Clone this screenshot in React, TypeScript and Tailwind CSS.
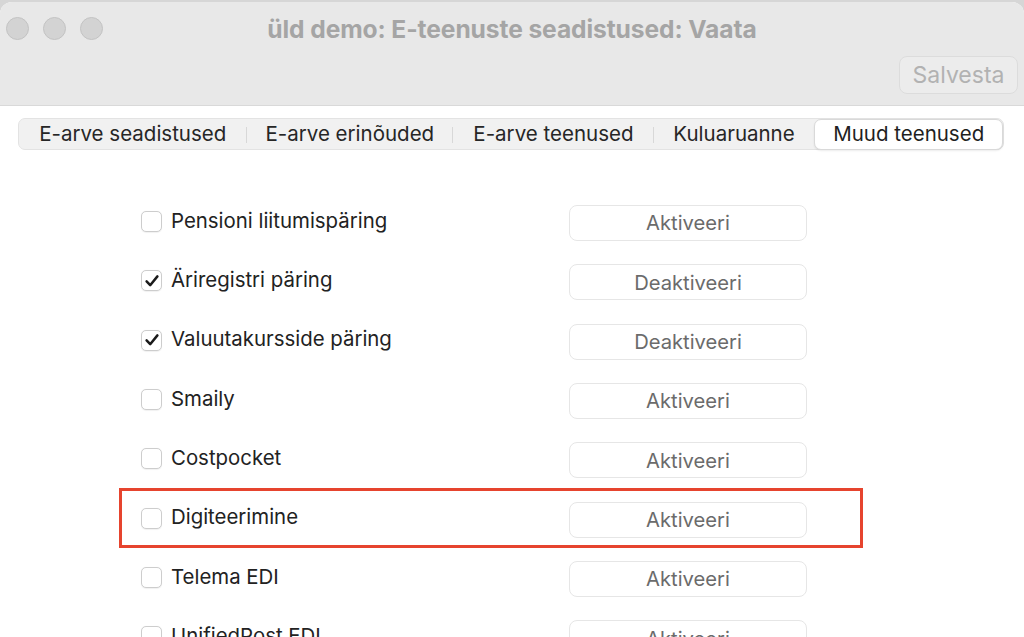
import React from 'react';

// Settings window: "Muud teenused" tab with service activation rows

const tabs = [
  { label: 'E-arve seadistused', w: 'w-[228px]' },
  { label: 'E-arve erinõuded', w: 'w-[207px]' },
  { label: 'E-arve teenused', w: 'w-[201px]' },
  { label: 'Kuluaruanne', w: 'w-[161px]' },
  { label: 'Muud teenused', w: 'w-[189px]' },
];

const services = [
  { name: 'Pensioni liitumispäring', on: false },
  { name: 'Äriregistri päring', on: true },
  { name: 'Valuutakursside päring', on: true },
  { name: 'Smaily', on: false },
  { name: 'Costpocket', on: false },
  { name: 'Digiteerimine', on: false, marked: true },
  { name: 'Telema EDI', on: false },
  { name: 'UnifiedPost EDI', on: false },
];

function Checkbox({ checked }: { checked: boolean }) {
  return (
    <span className="flex h-[21px] w-[21px] shrink-0 items-center justify-center rounded-[5px] border border-[#cdcdcd] bg-white shadow-[0_0.5px_1px_rgba(0,0,0,0.06)]">
      {checked && (
        <svg width="16" height="16" viewBox="0 0 16 16" fill="none">
          <path d="M2.6 8.4 6.2 12.2 13.4 3.4" stroke="#1a1a1a" strokeWidth="2.5" strokeLinecap="round" strokeLinejoin="round" />
        </svg>
      )}
    </span>
  );
}

export default function App() {
  return (
    <div className="h-[637px] w-[1024px] overflow-hidden bg-[#d6d6d6] pt-[2px] font-['Inter',sans-serif]">
      <div className="flex h-full flex-col overflow-hidden rounded-t-[12px] bg-white">
        {/* Title bar + toolbar */}
        <div className="h-[104px] shrink-0 border-b border-[#d9d9d9] bg-[#e8e8e8]">
          <div className="relative flex h-[52px] items-center">
            <div className="flex items-center gap-[14px] pl-[6px]">
              <span className="h-[23px] w-[23px] rounded-full border border-[#c3c3c3] bg-[#d3d3d3]" />
              <span className="h-[23px] w-[23px] rounded-full border border-[#c3c3c3] bg-[#d3d3d3]" />
              <span className="h-[23px] w-[23px] rounded-full border border-[#c3c3c3] bg-[#d3d3d3]" />
            </div>
            <div className="absolute inset-x-0 top-[9px] text-center text-[24.6px] font-bold tracking-[-0.1px] text-[#a5a5a5]">
              üld demo: E-teenuste seadistused: Vaata
            </div>
          </div>
          <div className="flex justify-end pr-[6px] pt-[2px]">
            <button className="flex h-[38px] w-[119px] items-center justify-center rounded-[8px] border border-[#dcdcdc] bg-[#ececec] text-[23px] text-[#b2b2b2]">
              Salvesta
            </button>
          </div>
        </div>

        {/* Segmented tabs */}
        <div className="pl-[18px] pt-[12px]">
          <div className="flex h-[32px] w-[986px] items-center rounded-[7px] border border-[#e3e3e3] bg-[#f1f1f1]">
            {tabs.map((t, i) => {
              const active = i === tabs.length - 1;
              const nextActive = i === tabs.length - 2;
              return (
                <div key={t.label} className={`relative flex h-full items-center justify-center ${t.w}`}>
                  {active ? (
                    <div className="flex h-[31px] w-full items-center justify-center rounded-[7px] border border-[#d9d9d9] bg-white pt-[1px] text-[20.5px] text-[#1f1f1f] shadow-[0_1px_2px_rgba(0,0,0,0.08)]">
                      {t.label}
                    </div>
                  ) : (
                    <span className="pt-[1px] text-[20.5px] text-[#262626]">{t.label}</span>
                  )}
                  {!active && !nextActive && (
                    <span className="absolute right-0 top-[8px] h-[16px] w-px bg-[#d8d8d8]" />
                  )}
                </div>
              );
            })}
          </div>
        </div>

        {/* Services list */}
        <div className="ml-[119px] mt-[42px] w-[744px]">
          {services.map((s) => (
            <div key={s.name} className="relative flex h-[59.3px] items-center">
              <div className="flex w-[450px] items-center gap-[9px] pl-[22px]">
                <Checkbox checked={s.on} />
                <span className="-mt-[1px] text-[20.4px] text-[#222222]">{s.name}</span>
              </div>
              <button className="mt-[3px] flex h-[36px] w-[238px] items-center justify-center rounded-[8px] border border-[#e6e6e6] bg-white pt-[1px] text-[20.2px] text-[#6b6b6b]">
                {s.on ? 'Deaktiveeri' : 'Aktiveeri'}
              </button>
              {s.marked && (
                <div className="pointer-events-none absolute inset-0 border-[3px] border-[#e6442e]" />
              )}
            </div>
          ))}
        </div>
      </div>
    </div>
  );
}
